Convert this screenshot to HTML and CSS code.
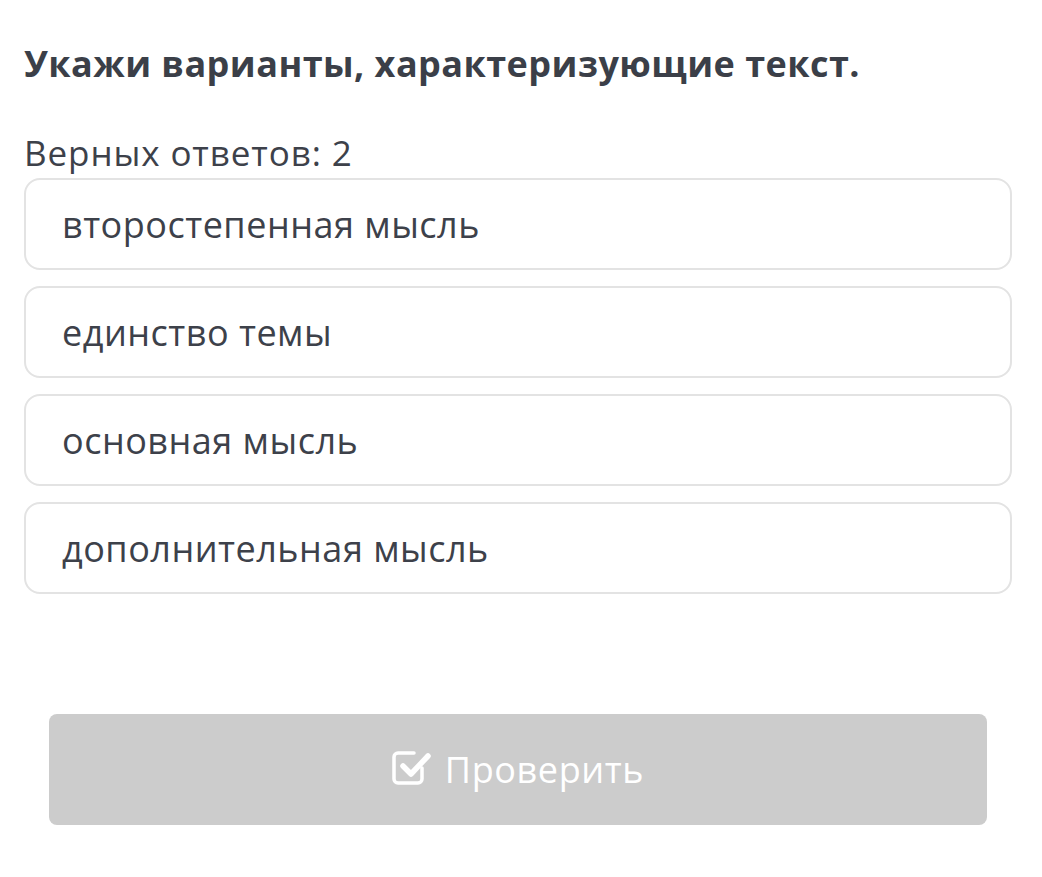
FILE: index.html
```html
<!DOCTYPE html>
<html>
<head>
    <meta charset="utf-8">
    <link rel="stylesheet" href="styles.css">
</head>
<body>
    <div class="quiz">
        <h1 class="question">Укажи варианты, характеризующие текст.</h1>
        <div class="hint">Верных ответов: 2</div>

        <div class="options">
            <div class="option">второстепенная мысль</div>
            <div class="option">единство темы</div>
            <div class="option">основная мысль</div>
            <div class="option">дополнительная мысль</div>
        </div>

        <button class="check-btn" disabled>
            <svg class="check-icon" width="40" height="34" viewBox="0 0 40 34">
                <path d="M30 17 V28 a4 4 0 0 1 -4 4 H6 a4 4 0 0 1 -4 -4 V6 a4 4 0 0 1 4 -4 H22" fill="none" stroke="#fff" stroke-width="3.5" stroke-linecap="round"/>
                <path d="M11 15 L19 23 L36 5" fill="none" stroke="#fff" stroke-width="5.5" stroke-linecap="round" stroke-linejoin="round"/>
            </svg>
            <span class="check-label">Проверить</span>
        </button>
    </div>
</body>
</html>
```

FILE: styles.css
```css
body {
    margin: 0;
    background: #ffffff;
    font-family: "Open Sans", "Noto Sans", sans-serif;
    color: #3d414a;
}
.quiz {
    padding: 39px 30px 0 24px;
}
.question {
    margin: 0;
    font-size: 36px;
    font-weight: bold;
    line-height: 49px;
    letter-spacing: 0.45px;
    color: #3b3f48;
}
.hint {
    margin-top: 43px;
    font-size: 35px;
    line-height: 44px;
    letter-spacing: 0.9px;
}
.options {
    display: flex;
    flex-direction: column;
    gap: 16px;
    margin-top: 3px;
}
.option {
    border: 2px solid #e3e3e3;
    border-radius: 16px;
    padding: 20px 36px 19px;
    font-size: 36px;
    line-height: 49px;
    letter-spacing: 0.5px;
}
.check-btn {
    display: flex;
    align-items: center;
    justify-content: center;
    gap: 13px;
    width: calc(100% - 50px);
    height: 111px;
    margin: 120px 25px 0;
    border: none;
    border-radius: 8px;
    background: #cccccc;
    color: #ffffff;
    font-family: "Open Sans", "Noto Sans", sans-serif;
    font-size: 36px;
}
.check-label {
    letter-spacing: 0.6px;
}
.check-icon {
    display: block;
    margin-top: -4px;
}
```
